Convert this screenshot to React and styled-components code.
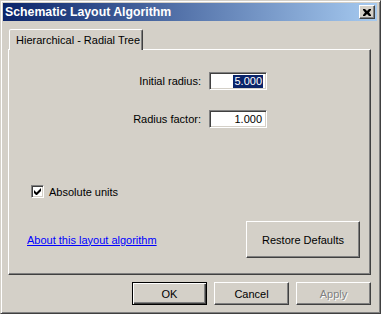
import React from 'react';
import styled, { createGlobalStyle, css } from 'styled-components';

const GlobalStyle = createGlobalStyle`
    html, body {
        margin: 0;
        padding: 0;
        background: #d4d0c8;
    }
    body {
        font-family: "Liberation Sans", Arial, sans-serif;
        font-size: 11px;
        color: #000;
    }
`;

const raised = css`
    border-style: solid;
    border-width: 1px;
    border-color: #fff #404040 #404040 #fff;
    box-shadow: inset -1px -1px 0 #808080, inset 1px 1px 0 #d4d0c8;
`;

const sunken = css`
    border-style: solid;
    border-width: 1px;
    border-color: #808080 #fff #fff #808080;
    box-shadow: inset 1px 1px 0 #404040, inset -1px -1px 0 #d4d0c8;
`;

const Window = styled.div`
    box-sizing: border-box;
    width: 381px;
    height: 314px;
    background: #d4d0c8;
    border-style: solid;
    border-width: 1px;
    border-color: #d4d0c8 #404040 #404040 #d4d0c8;
    box-shadow: inset 1px 1px 0 #fff, inset -1px -1px 0 #808080;
    padding: 2px 3px 3px 2px;
    display: flex;
    flex-direction: column;
`;

const TitleBar = styled.div`
    height: 18px;
    display: flex;
    align-items: center;
    justify-content: space-between;
    padding: 0 2px 0 2px;
    background: linear-gradient(to right, #0a246a, #a6caf0);
    color: #fff;
    font-weight: bold;
    font-size: 12.3px;
`;

const TitleText = styled.span`
    white-space: nowrap;
`;

const CloseButton = styled.button`
    box-sizing: border-box;
    width: 16px;
    height: 14px;
    padding: 0;
    background: #d4d0c8;
    display: flex;
    align-items: center;
    justify-content: center;
    ${raised};
`;

const Body = styled.div`
    flex: 1;
    display: flex;
    flex-direction: column;
    padding: 8px 6px 0 5px;
`;

const TabStrip = styled.div`
    display: flex;
    padding-left: 1px;
`;

const Tab = styled.div`
    box-sizing: border-box;
    width: 134px;
    height: 21px;
    margin-bottom: -1px;
    padding: 4px 0 0 6px;
    background: #d4d0c8;
    border-style: solid;
    border-width: 1px 1px 0 1px;
    border-color: #fff #404040 transparent #fff;
    border-radius: 2px 2px 0 0;
    box-shadow: inset -1px 0 0 #808080;
    position: relative;
    z-index: 1;
    white-space: nowrap;
`;

const Panel = styled.div`
    box-sizing: border-box;
    height: 226px;
    border-style: solid;
    border-width: 1px;
    border-color: #fff #404040 #404040 #fff;
    box-shadow: inset -1px -1px 0 #808080;
    display: flex;
    flex-direction: column;
    padding: 22px 0 0 0;
`;

const FieldGrid = styled.div`
    display: grid;
    grid-template-columns: 192px 58px;
    column-gap: 8px;
    row-gap: 20px;
    align-items: center;
`;

const Label = styled.label`
    text-align: right;
    white-space: nowrap;
`;

const TextBox = styled.div`
    box-sizing: border-box;
    height: 18px;
    background: #fff;
    ${sunken};
    display: flex;
    align-items: center;
    justify-content: flex-end;
    padding: 0 3px 0 0;
`;

const Value = styled.span`
    line-height: 13px;
    padding: 0 1px;
    ${({ $selected }) => $selected && css`
        background: #0a246a;
        color: #fff;
    `}
`;

const CheckRow = styled.div`
    display: flex;
    align-items: center;
    gap: 5px;
    margin: 57px 0 0 22px;
`;

const CheckBox = styled.span`
    box-sizing: border-box;
    width: 13px;
    height: 13px;
    background: #fff;
    ${sunken};
    display: flex;
    align-items: center;
    justify-content: center;
`;

const BottomRow = styled.div`
    display: flex;
    align-items: center;
    justify-content: space-between;
    margin: 23px 10px 0 18px;
`;

const Link = styled.a`
    color: #0000ff;
    text-decoration: underline;
    cursor: pointer;
`;

const Button = styled.button`
    box-sizing: border-box;
    font-family: inherit;
    font-size: 11px;
    color: #000;
    background: #d4d0c8;
    padding: 0;
    width: ${({ $width }) => $width || 75}px;
    height: ${({ $height }) => $height || 23}px;
    ${raised};
    ${({ $default }) => $default && css`
        border: 1px solid #000;
        box-shadow: inset 1px 1px 0 #fff, inset -1px -1px 0 #404040, inset -2px -2px 0 #808080;
    `}
    ${({ disabled }) => disabled && css`
        color: #808080;
        text-shadow: 1px 1px 0 #fff;
    `}
`;

const ButtonRow = styled.div`
    display: flex;
    justify-content: flex-end;
    gap: 7px;
    margin-top: 7px;
`;

function App() {
    return (
        <>
            <GlobalStyle />
            <Window>
                <TitleBar>
                    <TitleText>Schematic Layout Algorithm</TitleText>
                    <CloseButton aria-label="Close">
                        <svg width="8" height="7" viewBox="0 0 8 7">
                            <path d="M0 0h2l2 2 2-2h2v1L6 3.5 8 6v1H6L4 5 2 7H0V6l2-2.5L0 1z" fill="#000" />
                        </svg>
                    </CloseButton>
                </TitleBar>
                <Body>
                    <TabStrip>
                        <Tab>Hierarchical - Radial Tree</Tab>
                    </TabStrip>
                    <Panel>
                        <FieldGrid>
                            <Label>Initial radius:</Label>
                            <TextBox><Value $selected>5.000</Value></TextBox>
                            <Label>Radius factor:</Label>
                            <TextBox><Value>1.000</Value></TextBox>
                        </FieldGrid>
                        <CheckRow>
                            <CheckBox>
                                <svg width="7" height="7" viewBox="0 0 7 7">
                                    <path d="M0 2v3l2 2h1l4-4V0L2.5 4.5z" fill="#000" />
                                </svg>
                            </CheckBox>
                            <span>Absolute units</span>
                        </CheckRow>
                        <BottomRow>
                            <Link>About this layout algorithm</Link>
                            <Button $width={114} $height={37}>Restore Defaults</Button>
                        </BottomRow>
                    </Panel>
                    <ButtonRow>
                        <Button $default>OK</Button>
                        <Button>Cancel</Button>
                        <Button disabled>Apply</Button>
                    </ButtonRow>
                </Body>
            </Window>
        </>
    );
}

export default App;
